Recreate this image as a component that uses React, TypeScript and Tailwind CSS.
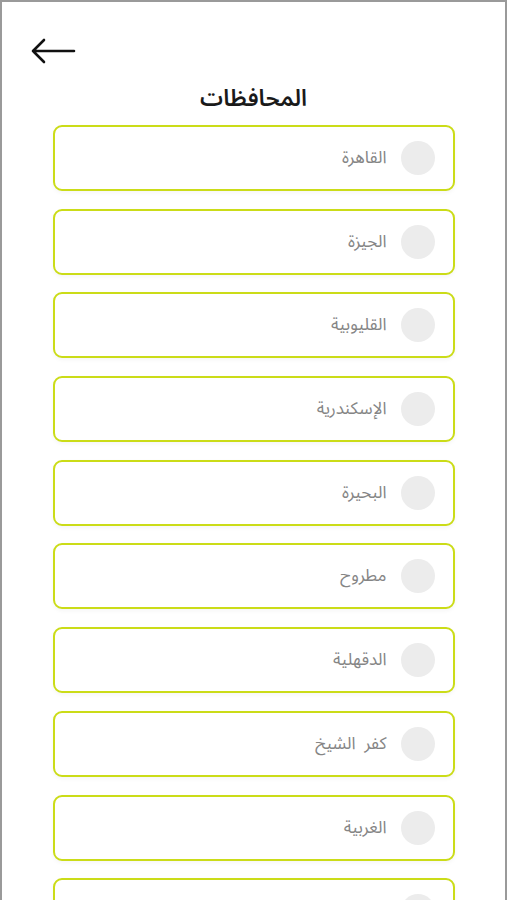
const governorates = [
  'القاهرة',
  'الجيزة',
  'القليوبية',
  'الإسكندرية',
  'البحيرة',
  'مطروح',
  'الدقهلية',
  'كفر  الشيخ',
  'الغربية',
  'المنوفية',
];

export default function App() {
  return (
    <div
      className="h-[900px] w-full overflow-hidden border-x-2 border-t-2 border-[#9a9a9a] bg-white"
      style={{ fontFamily: '"Noto Sans Arabic", "DejaVu Sans", "Noto Sans", sans-serif' }}
    >
      <div className="pl-[27px] pt-[34px]">
        <svg width="48" height="30" viewBox="0 0 48 30" fill="none">
          <path
            d="M45 15H4M15 4L4 15l11 11"
            stroke="#111"
            strokeWidth="2.6"
            strokeLinecap="round"
            strokeLinejoin="round"
          />
        </svg>
      </div>

      <h1 dir="rtl" className="mt-[18px] text-center text-[23px] font-semibold leading-[30px] text-[#1a1a1a]">
        المحافظات
      </h1>

      <div className="mt-[11px] flex flex-col gap-[17.7px]">
        {governorates.map((name) => (
          <div
            key={name}
            dir="rtl"
            className="mx-auto flex h-[66px] w-[402px] shrink-0 items-center gap-[14px] rounded-[9px] border-[2.5px] border-[#cbdc18] bg-white pr-[18px] shadow-[0_2px_4px_rgba(0,0,0,0.04)]"
          >
            <span className="h-[34px] w-[34px] shrink-0 rounded-full bg-[#ececec]" />
            <span className="whitespace-pre text-[17px] leading-[24px] text-[#858585]">{name}</span>
          </div>
        ))}
      </div>
    </div>
  );
}
